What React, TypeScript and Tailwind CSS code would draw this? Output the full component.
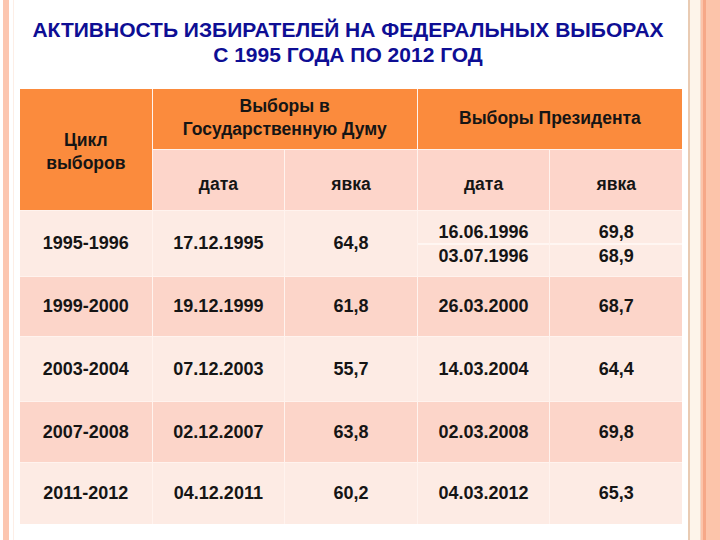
import React from "react";

const rows = [
  { c: "1995-1996", d: "17.12.1995", v: "64,8", pd: ["16.06.1996", "03.07.1996"], pv: ["69,8", "68,9"] },
  { c: "1999-2000", d: "19.12.1999", v: "61,8", pd: ["26.03.2000"], pv: ["68,7"] },
  { c: "2003-2004", d: "07.12.2003", v: "55,7", pd: ["14.03.2004"], pv: ["64,4"] },
  { c: "2007-2008", d: "02.12.2007", v: "63,8", pd: ["02.03.2008"], pv: ["69,8"] },
  { c: "2011-2012", d: "04.12.2011", v: "60,2", pd: ["04.03.2012"], pv: ["65,3"] },
];

function Split({ a, b }: { a: string; b: string }) {
  return (
    <div className="flex flex-col h-full">
      <div className="flex-1 flex items-end justify-center pb-[1px] leading-[20px]">{a}</div>
      <div className="h-[2px] bg-[#fff6f2]" />
      <div className="flex-1 flex items-start justify-center pt-[1px] leading-[20px]">{b}</div>
    </div>
  );
}

export default function App() {
  return (
    <div
      className="w-[720px] h-[540px] bg-white flex overflow-hidden"
      style={{ fontFamily: '"Liberation Sans", Arial, sans-serif' }}
    >
      <div className="w-[3px] bg-white" />
      <div className="w-[6px] bg-[#fcc6b0]" />
      <div className="w-[4px] bg-white" />
      <div className="w-[1px] bg-[#fdeee6]" />
      <div className="w-[6px] bg-white" />
      <div className="w-[662px] flex flex-col">
        <div className="pt-[17px] text-center font-bold text-[21px] leading-[25px] text-[#0e0e94] pr-[6px]">
          <div>АКТИВНОСТЬ ИЗБИРАТЕЛЕЙ НА ФЕДЕРАЛЬНЫХ ВЫБОРАХ</div>
          <div>С 1995 ГОДА ПО 2012 ГОД</div>
        </div>
        <div className="mt-[22px] grid grid-cols-5 grid-rows-[60px_60px_65px_59px_64px_60px_61px] gap-[1px] bg-[#fff3ee] text-[#151515] text-[18px]">
          <div className="row-span-2 bg-[#fb8b3d] flex flex-col items-center justify-center leading-[23px] pt-[4px] font-bold text-[17.5px]">
            <div>Цикл</div>
            <div>выборов</div>
          </div>
          <div className="col-span-2 bg-[#fb8b3d] flex flex-col items-center justify-center leading-[23px] pb-[2px] font-bold text-[17.5px]">
            <div>Выборы в</div>
            <div>Государственную Думу</div>
          </div>
          <div className="col-span-2 bg-[#fb8b3d] flex items-center justify-center pb-[2px] font-bold text-[17.5px]">
            Выборы Президента
          </div>
          <div className="bg-[#fdd5ca] flex items-center justify-center pt-[8px] font-bold text-[17.5px]">дата</div>
          <div className="bg-[#fdd5ca] flex items-center justify-center pt-[8px] font-bold text-[17.5px]">явка</div>
          <div className="bg-[#fdd5ca] flex items-center justify-center pt-[8px] font-bold text-[17.5px]">дата</div>
          <div className="bg-[#fdd5ca] flex items-center justify-center pt-[8px] font-bold text-[17.5px]">явка</div>
          {rows.map((r, i) => {
            const bg = i % 2 === 0 ? "bg-[#fdebe4]" : "bg-[#fcd5c9]";
            return (
              <React.Fragment key={r.c}>
                <div className={`${bg} font-bold flex items-center justify-center`}>{r.c}</div>
                <div className={`${bg} font-bold flex items-center justify-center`}>{r.d}</div>
                <div className={`${bg} font-bold flex items-center justify-center`}>{r.v}</div>
                <div className={`${bg} font-bold ${r.pd.length > 1 ? "" : "flex items-center justify-center"}`}>
                  {r.pd.length > 1 ? <Split a={r.pd[0]} b={r.pd[1]} /> : r.pd[0]}
                </div>
                <div className={`${bg} font-bold ${r.pv.length > 1 ? "" : "flex items-center justify-center"}`}>
                  {r.pv.length > 1 ? <Split a={r.pv[0]} b={r.pv[1]} /> : r.pv[0]}
                </div>
              </React.Fragment>
            );
          })}
        </div>
      </div>
      <div className="w-[6px] bg-white" />
      <div className="w-[2px] bg-[#e9cbb3]" />
      <div className="w-[10px] bg-[#fdf4ea]" />
      <div className="w-[1px] bg-[#f3d8c8]" />
      <div className="w-[2px] bg-[#fcc3a9]" />
      <div className="w-[3px] bg-[#f6a888]" />
      <div className="flex-1 bg-[#fcc4aa]" />
    </div>
  );
}
